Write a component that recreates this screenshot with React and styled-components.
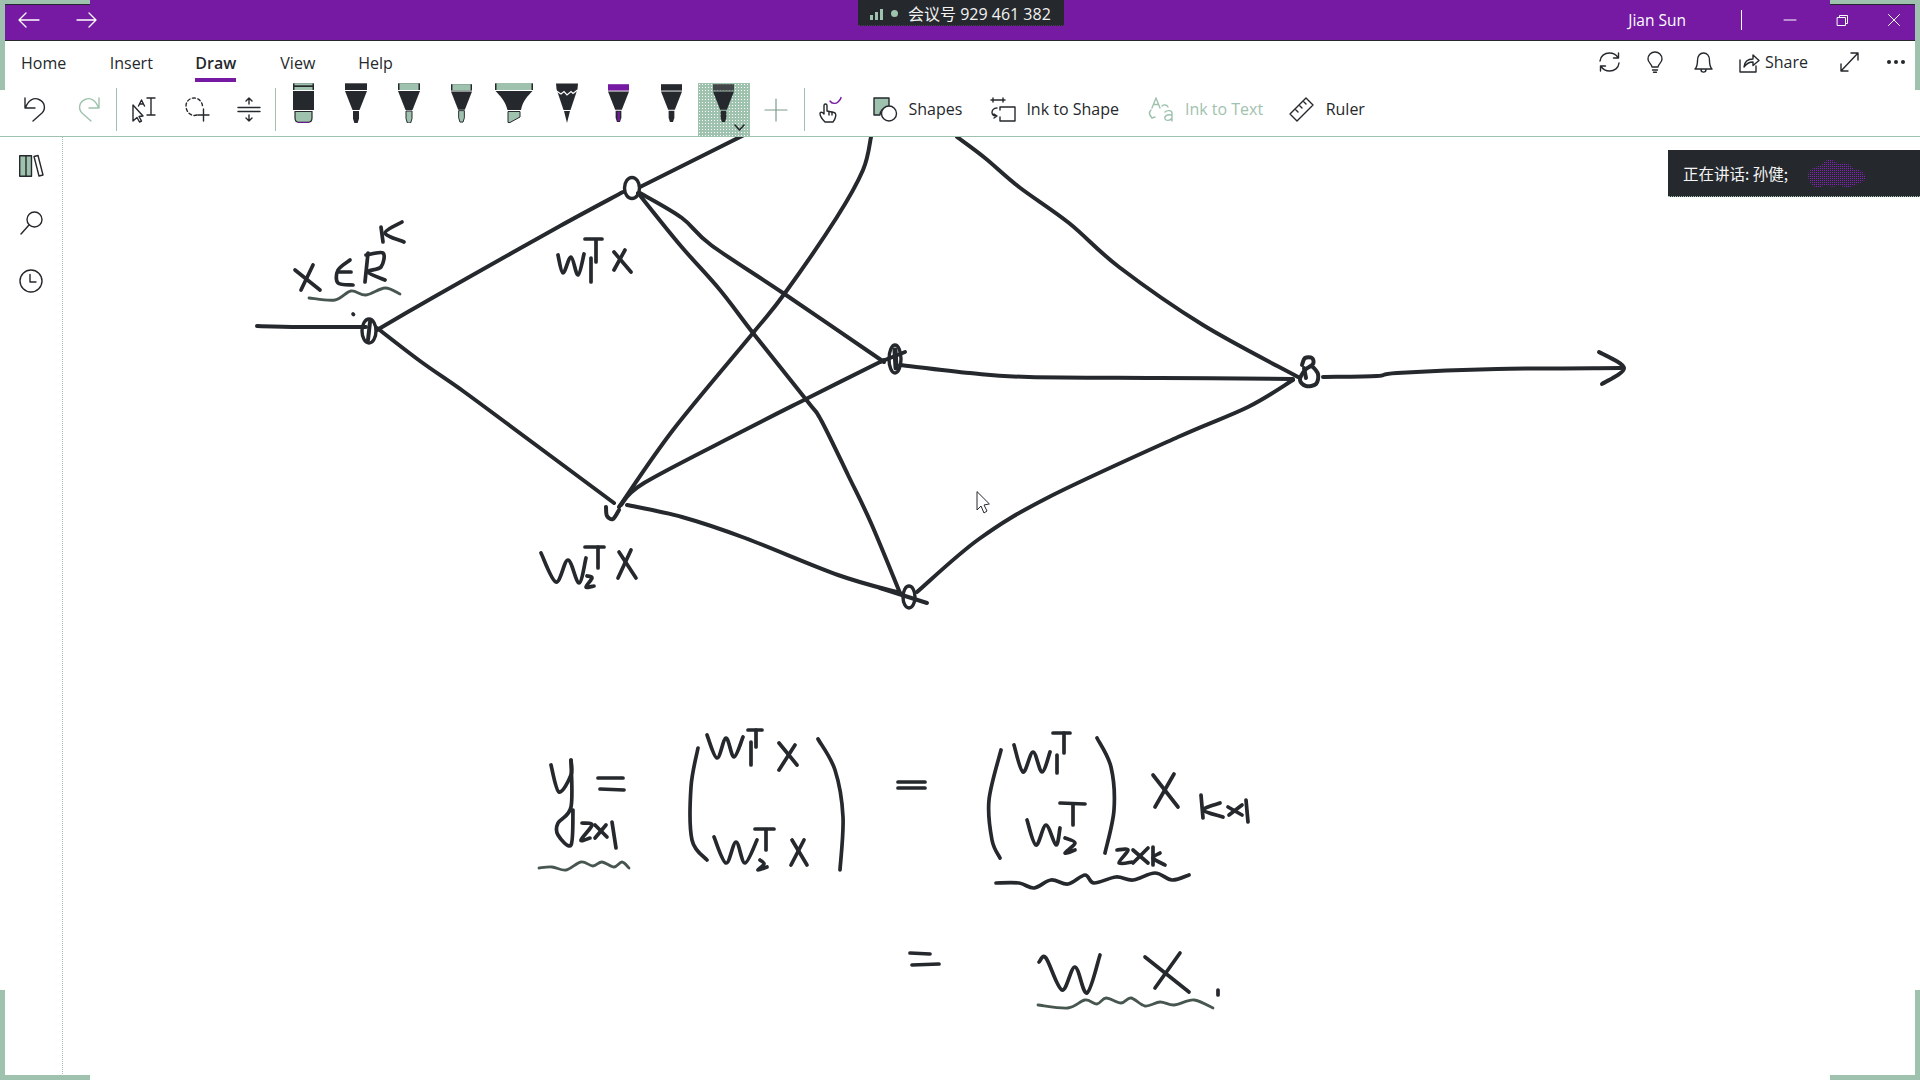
import React from "react";
import styled, { createGlobalStyle } from "styled-components";

const DARK = "#25282c";
const GREEN = "#9fc2ae";
const PURPLE = "#761aa3";

const Global = createGlobalStyle`
  html, body { margin: 0; padding: 0; background: #fff; overflow: hidden; }
  #root { height: 100vh; }
`;

const Page = styled.div`
  position: relative;
  display: flex;
  flex-direction: column;
  width: 1920px;
  height: 1080px;
  overflow: hidden;
  background: #fff;
  color: ${DARK};
  font-family: "Open Sans", "Liberation Sans", sans-serif;
`;

const TitleBar = styled.header`
  display: flex;
  align-items: center;
  flex: none;
  height: 40px;
  padding: 0 20px 0 18px;
  background: ${PURPLE};
  border-bottom: 1px solid ${DARK};
  color: #fff;
`;

const Svg = styled.svg`
  display: block;
  flex: none;
  overflow: visible;
  margin-left: ${(p) => p.$ml || 0}px;
  fill: none;
  stroke: ${(p) => p.$color || DARK};
  stroke-width: ${(p) => p.$sw ?? 1.4};
  stroke-linecap: round;
  stroke-linejoin: round;
`;

const UserName = styled.span`
  margin-left: auto;
  font-size: 15.5px;
  line-height: 20px;
`;

const TitleDivider = styled.span`
  width: 1px;
  height: 20px;
  margin-left: 55px;
  background: #fff;
`;

const TabRow = styled.nav`
  display: flex;
  align-items: flex-start;
  flex: none;
  height: 42px;
  padding-left: 21px;
`;

const Tab = styled.span`
  height: 41px;
  box-sizing: border-box;
  margin-left: ${(p) => p.$ml || 0}px;
  padding-top: 12px;
  border-bottom: 4px solid ${(p) => (p.$active ? PURPLE : "transparent")};
  font-size: 16px;
  font-weight: ${(p) => (p.$active ? 600 : 400)};
  line-height: 20px;
`;

const RightTools = styled.div`
  display: flex;
  align-items: center;
  height: 42px;
  margin-left: auto;
  padding-right: 14px;
`;

const ActionLabel = styled.span`
  margin-left: ${(p) => p.$ml || 0}px;
  color: ${(p) => p.$color || DARK};
  font-size: 16px;
  line-height: 20px;
  white-space: nowrap;
`;

const ToolLabel = styled(ActionLabel)`
  margin-bottom: 2px;
`;

const Toolbar = styled.div`
  display: flex;
  align-items: center;
  flex: none;
  height: 54px;
  box-sizing: border-box;
  padding-left: 24px;
  border-bottom: 1px solid ${GREEN};
`;

const Divider = styled.span`
  flex: none;
  width: 1px;
  height: 43px;
  margin-left: ${(p) => p.$ml || 0}px;
  background: ${GREEN};
`;

const PenSlot = styled.svg`
  display: block;
  flex: none;
  align-self: flex-start;
  margin-left: ${(p) => p.$ml || 0}px;
`;

const SelectedPen = styled.div`
  position: relative;
  display: flex;
  justify-content: flex-start;
  flex: none;
  align-self: stretch;
  box-sizing: border-box;
  width: 52px;
  margin-left: 16px;
  padding-left: 15px;
  background-color: ${GREEN};
  background-image: radial-gradient(circle, #fff 0.75px, transparent 0.9px);
  background-size: 3px 3px;
`;

const Chevron = styled(Svg)`
  position: absolute;
  left: 36px;
  top: 41px;
`;

const Main = styled.main`
  display: flex;
  flex: 1;
  min-height: 0;
`;

const Sidebar = styled.aside`
  display: flex;
  flex-direction: column;
  align-items: center;
  flex: none;
  gap: 34px;
  width: 63px;
  box-sizing: border-box;
  padding: 18px 0 0 0;
  border-right: 1px dotted ${GREEN};
`;

const Canvas = styled.section`
  position: relative;
  flex: 1;
  min-width: 0;
`;

const InkLayer = styled.svg`
  display: block;
  width: 100%;
  height: 100%;
`;

const MeetingPill = styled.div`
  position: absolute;
  top: 0;
  left: 858px;
  display: flex;
  align-items: center;
  width: 206px;
  height: 26px;
  box-sizing: border-box;
  padding: 2px 0 0 12px;
  background: ${DARK};
  border-bottom: 1px dotted #4a3a5c;
  color: #f2f2f2;
  font-family: "Open Sans", "Noto Sans CJK SC", sans-serif;
  font-size: 16px;
  line-height: 20px;
  white-space: nowrap;
`;

const PillStatus = styled.span`
  width: 7px;
  height: 7px;
  margin: 0 10px 0 6px;
  border-radius: 50%;
  background: ${GREEN};
`;

const Speaker = styled.div`
  position: absolute;
  top: 13px;
  right: 0;
  display: flex;
  align-items: center;
  width: 252px;
  height: 47px;
  box-sizing: border-box;
  padding-left: 15px;
  background: ${DARK};
  border-bottom: 1px dotted ${GREEN};
  color: #f4f4f4;
  font-family: "Noto Sans CJK SC", "Open Sans", sans-serif;
  font-size: 15.5px;
  line-height: 20px;
`;

const Corner = styled.span`
  position: absolute;
  width: 90px;
  height: 90px;
  box-sizing: border-box;
  border: 0 solid ${GREEN};
  ${(p) => (p.$y === "top" ? "top: 0; border-top-width: 4px; box-shadow: inset 0 1px 0 " + DARK + ";" : "bottom: 0; border-bottom-width: 5px;")}
  ${(p) => (p.$x === "left" ? "left: 0; border-left-width: 5px;" : "right: 0; border-right-width: 5px;")}
`;

function Pen({ ml, w = 22, head = DARK, tip = DARK, tipInner, headOutline }) {
  return (
    <PenSlot $ml={ml} width={w} height="40" viewBox="0 0 22 40">
      <rect x="0" y="0.3" width="22" height="6.7" fill={headOutline ? DARK : head} />
      {headOutline && <rect x="1.5" y="0.3" width="19" height="6.7" fill={head} />}
      <polygon points="0,8 22,8 14.5,27 7.5,27" fill={DARK} />
      <path d="M8 28H14V35.5L12.6 40H9.4L8 35.5Z" fill={tip} stroke={DARK} strokeWidth={tip === DARK ? 0 : 1} />
      {tipInner && <rect x="10" y="29" width="2.4" height="10" fill={tipInner} />}
    </PenSlot>
  );
}

function Eraser({ ml }) {
  return (
    <PenSlot $ml={ml} width="21" height="40" viewBox="0 0 21 40">
      <rect x="0" y="0.3" width="21" height="6.7" fill={DARK} />
      <rect x="1.5" y="0.3" width="18" height="2" fill={GREEN} />
      <rect x="1.5" y="4" width="18" height="3" fill={GREEN} />
      <rect x="0" y="8" width="21" height="19" fill={DARK} />
      <path d="M2 28.5H19V35C19 38 17.5 39.3 15 39.3H6C3.5 39.3 2 38 2 35Z" fill={GREEN} stroke={DARK} strokeWidth="1.2" />
      <path d="M5 39.4H16" stroke={PURPLE} strokeWidth="0.9" />
    </PenSlot>
  );
}

function Highlighter({ ml }) {
  return (
    <PenSlot $ml={ml} width="38" height="40" viewBox="0 0 38 40">
      <rect x="0" y="0.3" width="38" height="6.7" fill={DARK} />
      <rect x="1.5" y="0" width="35" height="7" fill={GREEN} />
      <path d="M0.5 8H37.5C33 13 28 17 26 27H12.5C10 17 5 13 0.5 8Z" fill={DARK} />
      <path d="M13 28.5H25V34L15 39.5H13Z" fill={GREEN} stroke={DARK} strokeWidth="1" />
    </PenSlot>
  );
}

function GalaxyPen({ ml }) {
  return (
    <PenSlot $ml={ml} width="22" height="40" viewBox="0 0 22 40">
      <polygon points="0,0.5 22,0.5 21.5,6 14.5,27 7.5,27 0.5,6" fill={DARK} />
      <path d="M0.5 8L5 11L8 8.5L11 12L15 8.5L17 10.5L21.5 7" fill="none" stroke="#fff" strokeWidth="1.2" />
      <polygon points="8,28 14,28 11,40" fill={DARK} />
    </PenSlot>
  );
}

/* Catmull-Rom through the sampled points of an ink stroke */
function smooth(pts) {
  if (pts.length < 3) return "M" + pts.map((p) => p.join(" ")).join("L");
  let d = "M" + pts[0].join(" ");
  for (let i = 0; i < pts.length - 1; i++) {
    const p0 = pts[i - 1] || pts[i];
    const p1 = pts[i];
    const p2 = pts[i + 1];
    const p3 = pts[i + 2] || p2;
    const c1 = [p1[0] + (p2[0] - p0[0]) / 6, p1[1] + (p2[1] - p0[1]) / 6];
    const c2 = [p2[0] - (p3[0] - p1[0]) / 6, p2[1] - (p3[1] - p1[1]) / 6];
    d += `C${c1[0].toFixed(1)} ${c1[1].toFixed(1)} ${c2[0].toFixed(1)} ${c2[1].toFixed(1)} ${p2[0]} ${p2[1]}`;
  }
  return d;
}

const EDGES = [
  [[257, 326], [300, 327], [366, 327]],
  [[377, 330], [420, 305], [471, 276], [560, 226], [623, 192]],
  [[640, 187], [750, 132]],
  [[377, 328], [420, 361], [463, 391], [509, 425], [614, 503]],
  [[640, 193], [682, 218], [711, 245], [783, 293], [884, 362]],
  [[638, 193], [680, 245], [720, 290], [753, 333], [808, 402], [821, 420], [848, 475], [871, 523], [900, 593]],
  [[619, 507], [673, 430], [753, 333], [785, 293], [837, 217], [863, 170], [871, 137]],
  [[621, 505], [644, 483], [741, 432], [808, 398], [884, 360]],
  [[627, 505], [682, 517], [745, 538], [838, 575], [900, 593]],
  [[957, 137], [985, 158], [1019, 187], [1069, 223], [1119, 267], [1203, 325], [1298, 377]],
  [[900, 365], [970, 373], [1029, 377], [1160, 378], [1293, 379]],
  [[1323, 377], [1377, 376], [1397, 373], [1497, 369], [1621, 368]],
  [[1599, 352], [1624, 368], [1602, 384]],
  [[917, 592], [979, 539], [1049, 497], [1178, 437], [1248, 407], [1293, 380]],
  [[880, 588], [927, 603]],
  [[606, 507], [607, 516], [613, 519], [619, 510]],
  [[370, 322], [368, 340]],
  [[1302, 365], [1305, 358], [1312, 358], [1313, 364], [1305, 370], [1300, 380], [1306, 386], [1316, 384], [1318, 374], [1312, 366]],
  [[1304, 368], [1306, 378]],
  [[880, 362], [905, 352]],
];

const NODES = [
  [369, 331, 7, 12],
  [632, 188, 7.5, 10.5],
  [895, 359, 6, 14],
  [909, 597, 6, 11],
];

const WRITING = [
  // x in R^k
  [[295, 270], [320, 290]], [[313, 265], [301, 290]],
  [[350, 260], [338, 270], [338, 283], [353, 285]], [[339, 272], [351, 272]],
  [[368, 253], [365, 282]], [[366, 255], [383, 253], [381, 267], [368, 272], [385, 280]],
  [[381, 227], [383, 242]], [[402, 222], [385, 233], [404, 242]],
  // w1T x
  [[558, 255], [563, 273], [571, 257], [578, 275], [584, 254]],
  [[591, 258], [591, 282]], [[585, 239], [602, 239]], [[596, 240], [596, 262]],
  [[614, 252], [631, 272]], [[625, 250], [614, 270]],
  // w2T x
  [[541, 553], [556, 582], [568, 560], [579, 583], [586, 558]],
  [[587, 576], [592, 578], [586, 587], [594, 586]],
  [[585, 547], [604, 547]], [[598, 547], [598, 568]],
  [[619, 552], [636, 578]], [[631, 550], [618, 578]],
  // y
  [[551, 765], [559, 792], [571, 775], [571, 760]],
  [[571, 760], [571, 807], [558, 823], [558, 835], [571, 845], [573, 810]],
  // =
  [[598, 778], [623, 778]], [[600, 789], [624, 790]],
  // 2x1
  [[582, 823], [592, 825], [581, 840], [590, 838]],
  [[595, 825], [607, 837]], [[606, 825], [595, 838]], [[612, 822], [616, 848]],
  // first vector
  [[698, 748], [691, 787], [692, 840], [707, 860]],
  [[707, 735], [717, 758], [726, 738], [734, 757], [743, 737]],
  [[751, 742], [751, 765]], [[748, 730], [762, 730]], [[756, 730], [756, 747]],
  [[779, 743], [797, 765]], [[795, 745], [779, 770]],
  [[818, 739], [835, 770], [843, 817], [840, 870]],
  [[714, 837], [726, 863], [736, 842], [745, 863], [757, 840]],
  [[760, 860], [764, 864], [758, 870], [767, 867]],
  [[755, 829], [774, 829]], [[766, 830], [766, 850]],
  [[792, 840], [807, 865]], [[804, 840], [791, 865]],
  // =
  [[898, 782], [925, 782]], [[898, 788], [925, 788]],
  // second matrix
  [[1001, 750], [989, 800], [992, 840], [1000, 858]],
  [[1014, 745], [1023, 772], [1033, 752], [1042, 772], [1050, 752]],
  [[1057, 755], [1057, 773]], [[1053, 733], [1070, 733]], [[1064, 733], [1064, 753]],
  [[1027, 820], [1036, 845], [1046, 825], [1056, 845], [1060, 828]],
  [[1065, 838], [1075, 843], [1065, 853], [1075, 850]],
  [[1060, 803], [1085, 804]], [[1073, 804], [1073, 825]],
  [[1097, 738], [1111, 767], [1114, 810], [1105, 853]],
  [[1117, 850], [1128, 850], [1119, 863], [1132, 862]],
  [[1133, 850], [1148, 863]], [[1148, 848], [1133, 863]],
  [[1153, 847], [1153, 865]], [[1160, 853], [1153, 858], [1165, 865]],
  // X kx1
  [[1153, 775], [1178, 807]], [[1174, 774], [1155, 807]],
  [[1201, 795], [1203, 818]], [[1220, 803], [1203, 810], [1223, 817]],
  [[1228, 807], [1242, 815]], [[1242, 805], [1229, 815]], [[1246, 800], [1248, 822]],
  // = W X .
  [[910, 953], [930, 954]], [[912, 965], [939, 964]],
  [[1039, 962], [1046, 958], [1062, 990], [1075, 967], [1087, 993], [1100, 955]],
  [[1145, 957], [1189, 992]], [[1180, 953], [1155, 988]],
  [[1218, 990], [1218, 995]],
  [[353, 314], [353.5, 314.5]],
  // underline of the second matrix
  [[996, 883], [1019, 883], [1034, 888], [1051, 880], [1068, 884], [1085, 875], [1094, 883], [1116, 877], [1133, 880], [1155, 873], [1172, 880], [1189, 875]],
];

const SQUIGGLES = [
  [[309, 298], [335, 300], [351, 291], [366, 295], [385, 288], [400, 294]],
  [[539, 868], [552, 867], [566, 870], [581, 862], [593, 866], [602, 862], [614, 867], [622, 862], [629, 868]],
  [[1038, 1005], [1068, 1008], [1085, 1000], [1097, 1004], [1106, 998], [1121, 1003], [1131, 998], [1145, 1006], [1160, 1002], [1174, 1005], [1194, 1000], [1213, 1008]],
];

function Ink() {
  return (
    <InkLayer viewBox="63 137 1857 943" fill="none" stroke={DARK} strokeLinecap="round" strokeLinejoin="round">
      {EDGES.map((p, i) => <path key={i} d={smooth(p)} strokeWidth="4" />)}
      {NODES.map(([cx, cy, rx, ry], i) => <ellipse key={i} cx={cx} cy={cy} rx={rx} ry={ry} strokeWidth="3.4" />)}
      <path d="M895 350L896 368" strokeWidth="5" />
      {WRITING.map((p, i) => <path key={i} d={smooth(p)} strokeWidth="3.7" />)}
      {SQUIGGLES.map((p, i) => <path key={i} d={smooth(p)} strokeWidth="2.8" stroke="#47564f" />)}
      <path d="M977 492V510L981 506L984 513L987 511L984 505L989 504Z" fill="#fff" strokeWidth="1" />
    </InkLayer>
  );
}

export default function App() {
  return (
    <Page>
      <Global />
      <TitleBar>
        <Svg $color="#fff" $sw={1.3} width="21" height="16" viewBox="0 0 21 16"><path d="M21 8H1M8 1L1 8L8 15" /></Svg>
        <Svg $ml={38} $color="#fff" $sw={1.3} width="20" height="16" viewBox="0 0 20 16"><path d="M0 8H19M12 1L19 8L12 15" /></Svg>
        <UserName>Jian Sun</UserName>
        <TitleDivider />
        <Svg $ml={42} $color="#fff" $sw={1} width="12" height="12" viewBox="0 0 12 12"><path d="M0 6H12" /></Svg>
        <Svg $ml={41} $color="#fff" $sw={1} width="11" height="11" viewBox="0 0 11 11"><path d="M.5 2.5H8.5V10.5H.5ZM2.5 2.5V.5H10.5V8.5H8.5" /></Svg>
        <Svg $ml={40} $color="#fff" $sw={1} width="12" height="12" viewBox="0 0 12 12"><path d="M.5.5L11.5 11.5M11.5.5L.5 11.5" /></Svg>
      </TitleBar>

      <TabRow>
        <Tab>Home</Tab>
        <Tab $ml={43.5}>Insert</Tab>
        <Tab $ml={42.5} $active>Draw</Tab>
        <Tab $ml={44}>View</Tab>
        <Tab $ml={43}>Help</Tab>
        <RightTools>
          <Svg width="21" height="20" viewBox="0 0 21 20"><path d="M1 9C1.5 4 5.5 1 10.5 1C14 1 17 2.5 19 5.5M19.5 1V6H14.5M20 11C19.5 16 15.500 19 10.500 19C7 19 4 17.500 2 14.500M1.500 19V14H6.500" /></Svg>
          <Svg $ml={27} width="16" height="21" viewBox="0 0 16 21"><path d="M5 15C5 12 1 11 1 7A7 7 0 0 1 15 7C15 11 11 12 11 15ZM5.500 18H10.500M6.500 20.300H9.500" /></Svg>
          <Svg $ml={31} width="19" height="21" viewBox="0 0 19 21"><path d="M1 17C3 15 3.500 13 3.500 8.500C3.500 4 6 1 9.500 1C13 1 15.500 4 15.500 8.500C15.500 13 16 15 18 17ZM7 17.500C7 21 12 21 12 17.500" /></Svg>
          <Svg $ml={26} width="20" height="21" viewBox="0 0 20 21"><path d="M1 8V20H17V14M5 15C5.500 10 9 7 14 7V3L20 8.500L14 13.500V10C10 10 7.500 11.500 5 15Z" /></Svg>
          <ActionLabel $ml={6}>Share</ActionLabel>
          <Svg $ml={32} width="19" height="20" viewBox="0 0 19 20"><path d="M1 19L18 1M11 1H18V8M1 12V19H8" /></Svg>
          <Svg $ml={27} $sw={0} width="20" height="6" viewBox="0 0 20 6"><g fill={DARK}><circle cx="3" cy="3" r="2" /><circle cx="10" cy="3" r="2" /><circle cx="17" cy="3" r="2" /></g></Svg>
        </RightTools>
      </TabRow>

      <Toolbar>
        <Svg width="22" height="25" viewBox="0 0 22 25"><path d="M1 1V11H11M1.500 11C4 3 10 0 15 2.500C21 5 22 12 18 16L9 24" /></Svg>
        <Svg $ml={31.5} $color={GREEN} width="22" height="25" viewBox="0 0 22 25"><path d="M21 1V11H11M20.500 11C18 3 12 0 7 2.500C1 5 0 12 4 16L13 24" /></Svg>
        <Divider $ml={16} />
        <Svg $ml={15} width="24" height="25" viewBox="0 0 24 25"><path d="M1 8V24L5 20.500L7.500 25L9.500 24L7 19.500L11 19ZM6.500 9L9.500 3L12.500 9M8 7H11M15 1H23M15 18H23M19 1V18" /></Svg>
        <Svg $ml={29} width="24" height="25" viewBox="0 0 24 25"><path d="M12 18C6 20 1 15 1 9C1 4 5 1 9 1C13 1 17 4 17.500 9" strokeDasharray="3 2.500" /><path d="M13 18H24M18.500 12V24" /></Svg>
        <Svg $ml={29} width="22" height="25" viewBox="0 0 22 25"><path d="M0 10.500H22M0 14.500H22M11 1V7M8 4L11 1L14 4M11 18V24M8 21L11 24L14 21" /></Svg>
        <Divider $ml={15.500} />
        <Eraser ml={16.500} />
        <Pen ml={31} />
        <Pen ml={31} head={GREEN} tip={GREEN} headOutline />
        <Pen ml={31} w={21} head={GREEN} tip={GREEN} headOutline />
        <Highlighter ml={23} />
        <GalaxyPen ml={23} />
        <Pen ml={30} w={21} head={PURPLE} tipInner={PURPLE} />
        <Pen ml={32} w={21} />
        <SelectedPen>
          <Pen w={21} head="#43474a" />
          <Chevron $sw={1.6} width="11" height="7" viewBox="0 0 11 7"><path d="M1 1L5.500 6L10 1" /></Chevron>
        </SelectedPen>
        <Svg $ml={15} $color="#7c9c8b" $sw={1.2} width="22" height="22" viewBox="0 0 22 22"><path d="M0 11H22M11 0V22" /></Svg>
        <Divider $ml={17} />
        <Svg $ml={14} width="25" height="26" viewBox="0 0 25 26"><path d="M6 25C3 22 1 19 1 16.500C1 15 3 14.500 5 17V8.500C5 6.500 8 6.500 8 8.500V14L15 15.500C17 16 17 18 16.500 20C16 22 15 24 14 25Z" /><path d="M10 14.500V18M13 15V18" /><path d="M11 4C13 7 17 7 19 5C20.500 3.500 22 2 22 .500" stroke={PURPLE} /></Svg>
        <Svg $ml={29} width="24" height="25" viewBox="0 0 24 25"><path d="M1 1H16V10C10 10 7 14 7 18H1Z" fill={GREEN} /><circle cx="16" cy="16.500" r="7.500" fill="#fff" /></Svg>
        <ToolLabel $ml={12}>Shapes</ToolLabel>
        <Svg $ml={29} width="25" height="25" viewBox="0 0 25 25"><path d="M0 3H14M2 1V5M12 1V5M9 10H24V24H9M9 10V13M6 11C2 11 1 14 1 15.500C1 18 3 19 6 19M3 17L6 19L3 21M9 20V24" /></Svg>
        <ToolLabel $ml={10}>Ink to Shape</ToolLabel>
        <Svg $ml={30} $color={GREEN} width="24" height="25" viewBox="0 0 24 25"><path d="M7 1L3 11M7 1L11 11M4.500 7.500H9.500M2 13C0 15 0 18 3 21M1 18L3 21L6 20M13 9C15 7 18 8 19 10M23 24V16C23 13 18 13 16 15M23 18C17 17 15 20 16 22C17 24 21 24 23 21" /></Svg>
        <ToolLabel $ml={12} $color={GREEN}>Ink to Text</ToolLabel>
        <Svg $ml={25.500} width="25" height="25" viewBox="0 0 25 25"><path d="M1 17L17 1L24 8L8 24ZM6 12L9 15M10 8L13 11M14 4L17 7" /></Svg>
        <ToolLabel $ml={12}>Ruler</ToolLabel>
      </Toolbar>

      <Main>
        <Sidebar>
          <Svg width="24" height="22" viewBox="0 0 24 22"><path d="M.7.700H7V21.300H.7ZM7 .700H12.500V21.300H7Z" fill={GREEN} /><path d="M15 1.500L19 .500L24 20L20 21Z" /></Svg>
          <Svg width="23" height="24" viewBox="0 0 23 24"><circle cx="14.500" cy="8.500" r="7.500" /><path d="M9 14L1 23" /></Svg>
          <Svg width="24" height="24" viewBox="0 0 24 24"><circle cx="12" cy="12" r="11" /><path d="M11 5.500V13H17" /></Svg>
        </Sidebar>
        <Canvas>
          <Ink />
          <Speaker>
            正在讲话: 孙健;
            <Svg $ml={20} $sw={0} width="58" height="30" viewBox="0 0 58 30">
              <defs>
                <pattern id="voice" width="2" height="2" patternUnits="userSpaceOnUse"><rect width="1" height="1" fill="#8a20c0" stroke="none" /></pattern>
              </defs>
              <path d="M0 17C2 8 10 10 14 6C20 -1 26 2 30 6C36 3 42 6 46 11C52 10 58 16 58 21C54 25 48 26 44 28C38 31 34 27 28 28C22 30 18 25 13 29C6 31 0 25 0 17Z" fill="url(#voice)" />
            </Svg>
          </Speaker>
        </Canvas>
      </Main>

      <MeetingPill>
        <Svg $sw={0} width="15" height="12" viewBox="0 0 15 12"><g fill={GREEN}><rect x="0" y="7" width="3" height="5" /><rect x="5" y="4" width="3" height="8" /><rect x="10" y="1" width="3" height="11" /></g></Svg>
        <PillStatus />
        会议号 929 461 382
      </MeetingPill>

      <Corner $y="top" $x="left" />
      <Corner $y="top" $x="right" />
      <Corner $y="bottom" $x="left" />
      <Corner $y="bottom" $x="right" />
    </Page>
  );
}
